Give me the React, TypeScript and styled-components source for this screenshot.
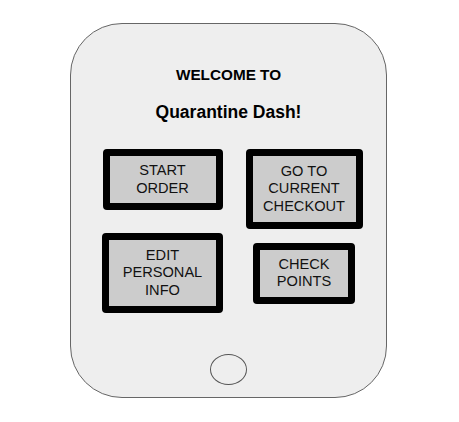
import styled, { createGlobalStyle } from 'styled-components';

const GlobalStyle = createGlobalStyle`
    html, body {
        margin: 0;
        padding: 0;
        background-color: #ffffff;
        font-family: 'Liberation Sans', Arial, sans-serif;
    }
`;

const Page = styled.div`
    width: 459px;
    height: 422px;
    padding-top: 23px;
    box-sizing: border-box;
`;

const Phone = styled.div`
    width: 317px;
    height: 375px;
    margin-left: 70px;
    box-sizing: border-box;
    border: 1.5px solid #666666;
    border-radius: 52px;
    background-color: #eeeeee;
    display: flex;
    flex-direction: column;
    align-items: center;
    padding: 42px 0 12px 0;
`;

const Welcome = styled.div`
    font-size: 15.3px;
    line-height: 18px;
    font-weight: bold;
    color: #000000;
`;

const Title = styled.div`
    margin-top: 18px;
    font-size: 17.5px;
    line-height: 21px;
    font-weight: bold;
    color: #000000;
`;

const ButtonGrid = styled.div`
    align-self: flex-start;
    margin: 26px 0 0 28px;
    display: grid;
    grid-template-columns: 127px 127px;
    column-gap: 14.5px;
    row-gap: 4px;
    justify-items: center;
`;

const MenuButton = styled.div<{ $w: number; $h: number; $align: string }>`
    width: ${(p) => p.$w}px;
    height: ${(p) => p.$h}px;
    align-self: ${(p) => p.$align};
    box-sizing: border-box;
    border: 7px solid #000000;
    border-radius: 4px;
    background-color: #cccccc;
    display: flex;
    align-items: center;
    justify-content: center;
    text-align: center;
    font-size: 14.6px;
    line-height: 17.5px;
    color: #111111;
`;

const HomeButton = styled.div`
    margin-top: auto;
    width: 37px;
    height: 31px;
    box-sizing: border-box;
    border: 1.5px solid #555555;
    border-radius: 50%;
`;

const buttons = [
    { lines: ['START', 'ORDER'], w: 120, h: 61, align: 'start' },
    { lines: ['GO TO', 'CURRENT', 'CHECKOUT'], w: 117, h: 80, align: 'start' },
    { lines: ['EDIT', 'PERSONAL', 'INFO'], w: 121, h: 80, align: 'center' },
    { lines: ['CHECK', 'POINTS'], w: 102, h: 61, align: 'center' },
];

const App = () => {
    return (
        <Page>
            <GlobalStyle />
            <Phone>
                <Welcome>WELCOME TO</Welcome>
                <Title>Quarantine Dash!</Title>
                <ButtonGrid>
                    {
                        buttons.map((b) => (
                            <MenuButton key={b.lines.join(' ')} $w={b.w} $h={b.h} $align={b.align}>
                                <div>
                                    {b.lines.map((l) => <div key={l}>{l}</div>)}
                                </div>
                            </MenuButton>
                        ))
                    }
                </ButtonGrid>
                <HomeButton />
            </Phone>
        </Page>
    );
}
export default App;
